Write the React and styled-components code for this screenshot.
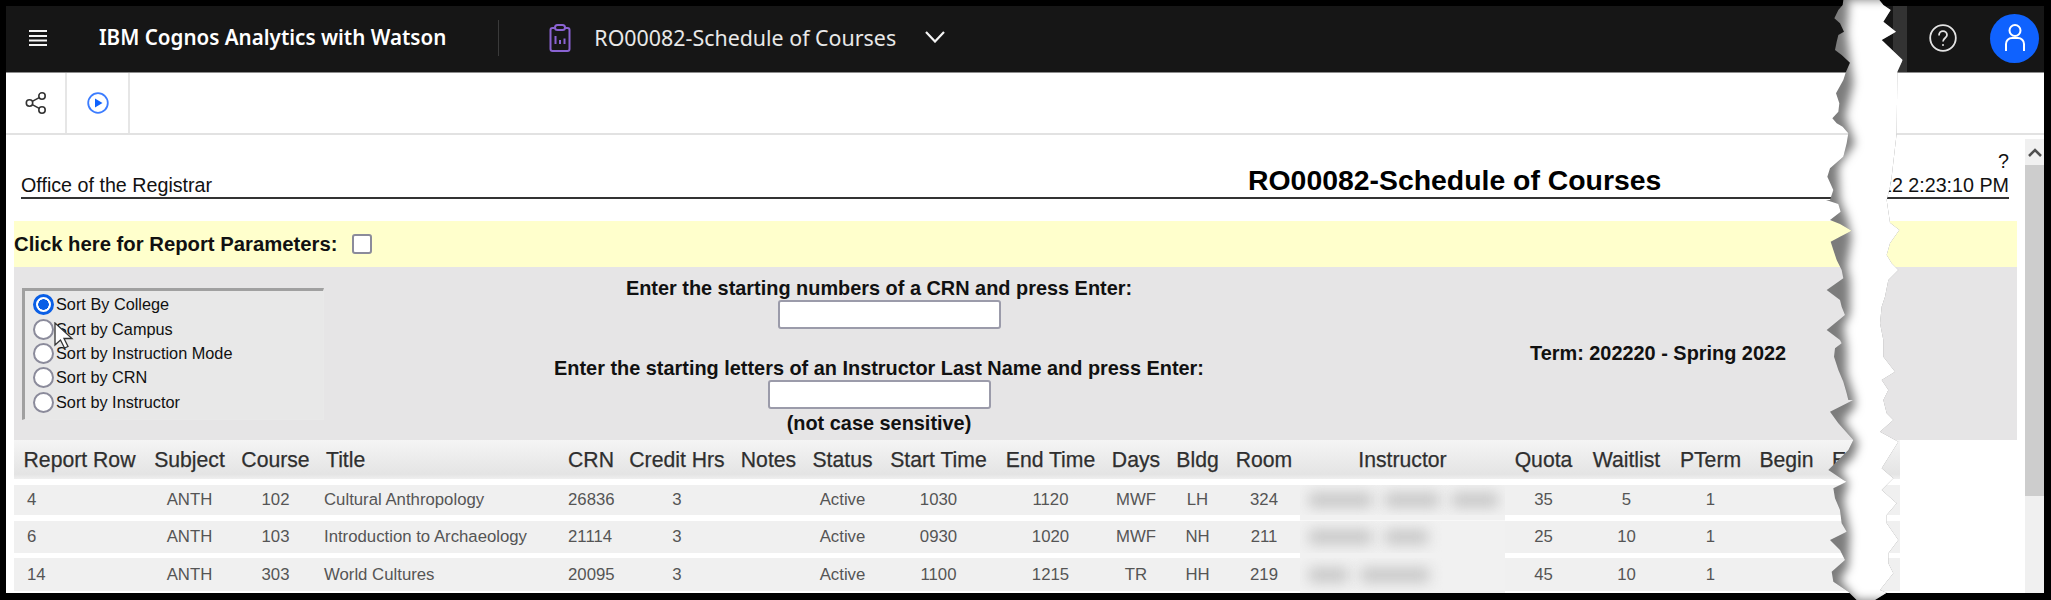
import React from 'react';
import styled, { createGlobalStyle } from 'styled-components';

const GlobalStyle = createGlobalStyle`
	html, body {
		margin: 0;
		background: #000;
		overflow: hidden;
	}
	* {
		box-sizing: border-box;
	}
`;

const COLUMNS =
	'131px 89px 83px 244px 60px 112px 71px 77px 115px 109px 62px 61px 72px 205px 77px 89px 79px 73px 77px';

const sortOptions = [
	'Sort By College',
	'Sort by Campus',
	'Sort by Instruction Mode',
	'Sort by CRN',
	'Sort by Instructor'
];

const headers = [
	{ label: 'Report Row' },
	{ label: 'Subject' },
	{ label: 'Course' },
	{ label: 'Title', align: 'left' },
	{ label: 'CRN' },
	{ label: 'Credit Hrs' },
	{ label: 'Notes' },
	{ label: 'Status' },
	{ label: 'Start Time' },
	{ label: 'End Time' },
	{ label: 'Days' },
	{ label: 'Bldg' },
	{ label: 'Room' },
	{ label: 'Instructor' },
	{ label: 'Quota' },
	{ label: 'Waitlist' },
	{ label: 'PTerm' },
	{ label: 'Begin' },
	{ label: 'End', align: 'left' }
];

const rows = [
	{
		height: 30,
		row: '4',
		course: '102',
		title: 'Cultural Anthropology',
		crn: '26836',
		start: '1030',
		end: '1120',
		days: 'MWF',
		bldg: 'LH',
		room: '324',
		blur: [63, 54, 46],
		quota: '35',
		wait: '5'
	},
	{
		height: 32,
		row: '6',
		course: '103',
		title: 'Introduction to Archaeology',
		crn: '21114',
		start: '0930',
		end: '1020',
		days: 'MWF',
		bldg: 'NH',
		room: '211',
		blur: [63, 43],
		quota: '25',
		wait: '10'
	},
	{
		height: 33,
		row: '14',
		course: '303',
		title: 'World Cultures',
		crn: '20095',
		start: '1100',
		end: '1215',
		days: 'TR',
		bldg: 'HH',
		room: '219',
		blur: [39, 68],
		quota: '45',
		wait: '10'
	}
];

const TEAR_LEFT =
	'70,0 68,15 55,30 43,55 60,70 72,95 55,105 50,125 45,150 65,165 90,188 78,215 70,240 48,280 58,310 55,335 37,355 50,370 68,380 85,400 80,430 70,470 30,505 22,530 40,570 30,600 18,600 55,612 62,635 30,660 60,672 95,692 60,710 32,725 40,750 50,780 65,810 70,835 20,870 60,900 65,920 75,945 20,990 60,1020 65,1030 45,1045 42,1070 55,1110 70,1145 80,1180 85,1200 100,1200 30,1235 55,1270 100,1320 85,1350 25,1410 70,1440 80,1445 40,1465 45,1495 60,1530 65,1570 80,1595 30,1620 60,1650 75,1680 35,1715 40,1745 85,1775 110,1800';
const TEAR_RIGHT =
	'165,1800 200,1778 180,1770 220,1720 205,1690 205,1660 235,1620 200,1570 200,1545 230,1510 185,1470 220,1435 185,1405 235,1325 180,1295 220,1260 200,1240 190,1200 205,1170 185,1140 225,1115 190,1070 190,1020 180,970 185,920 195,890 205,840 235,810 215,790 200,765 210,730 238,690 210,668 200,600 210,560 215,530 230,400 232,215 248,180 185,120 228,95 190,65 212,30 190,15 178,0';
const TEAR_CORE =
	'85,0 85,30 80,100 90,180 100,250 75,350 105,430 55,500 60,600 80,650 95,710 80,800 90,840 90,940 70,980 80,1040 80,1120 105,1200 105,1220 70,1260 115,1330 100,1370 60,1410 85,1450 70,1500 90,1600 85,1700 60,1740 110,1800 300,1800 300,0';

const Page = styled.div`
	position: relative;
	width: 2051px;
	height: 600px;
	padding: 6px 7px 7px 6px;
	background: #000;
	font-family: 'Liberation Sans', Arial, sans-serif;
`;

const Frame = styled.div`
	display: flex;
	flex-direction: column;
	height: 100%;
	background: #fff;
	overflow: hidden;
`;

const TopBar = styled.header`
	display: flex;
	align-items: center;
	flex: none;
	height: 67px;
	padding: 0 5px 2px 23px;
	background: #161616;
	border-bottom: 1px solid #8d8d8d;
	color: #fff;
	font-family: 'Noto Sans', sans-serif;
`;

const Brand = styled.span`
	margin: 0 0 2px 52px;
	font-size: 20.6px;
	font-weight: 600;
	white-space: nowrap;
`;

const BarDivider = styled.span`
	width: 1px;
	height: 36px;
	margin-left: 52px;
	background: #3a3a3a;
`;

const ClipIcon = styled.svg`
	margin-left: 50px;
`;

const ReportName = styled.span`
	margin: 0 0 2px 23px;
	font-size: 21.4px;
	white-space: nowrap;
	color: #e8e8e8;
`;

const Chevron = styled.svg`
	margin: 0 0 2px 29px;
`;

const BarShade = styled.span`
	align-self: stretch;
	width: 14px;
	margin: 0 0 -2px auto;
	background: #333;
`;

const HelpIcon = styled.svg`
	margin-left: 22px;
`;

const Avatar = styled.span`
	display: flex;
	align-items: center;
	justify-content: center;
	width: 49px;
	height: 49px;
	margin-left: 33px;
	border-radius: 50%;
	background: #0f62fe;
`;

const ToolBar = styled.div`
	display: flex;
	flex: none;
	height: 62px;
	background: #fff;
	border-bottom: 2px solid #e2e2e2;
`;

const ToolButton = styled.div`
	display: flex;
	align-items: center;
	justify-content: center;
	width: ${p => p.$width}px;
	border-right: 2px solid #e6e6e6;
`;

const Body = styled.div`
	display: flex;
	flex: 1;
	min-height: 0;
`;

const Report = styled.main`
	flex: 1;
	min-width: 0;
	padding: 0 8px;
	color: #111;
`;

const ReportHead = styled.div`
	display: grid;
	grid-template-columns: 1227px 1fr auto;
	align-items: end;
	width: 1988px;
	height: 64px;
	margin: 0 0 22px 7px;
	border-bottom: 2px solid #333;
	font-size: 19.7px;
	line-height: 24px;
`;

const ReportTitle = styled.h1`
	margin: 0 0 1px;
	font-size: 28.4px;
	line-height: 32px;
	font-weight: 700;
	color: #000;
`;

const Stamp = styled.div`
	text-align: right;
	white-space: nowrap;
`;

const ParamBar = styled.label`
	display: flex;
	align-items: center;
	gap: 14px;
	height: 46px;
	background: #ffffcc;
	font-size: 20.3px;
	font-weight: 700;
`;

const Check = styled.input`
	appearance: none;
	width: 20px;
	height: 20px;
	margin: 0;
	background: #fff;
	border: 2.5px solid #8b8b9b;
	border-radius: 3px;
`;

const Panel = styled.section`
	display: grid;
	grid-template-columns: 302px 1110px 1fr;
	height: 173px;
	padding: 0 0 0 8px;
	background: #e6e5e6;
`;

const SortBox = styled.div`
	display: flex;
	flex-direction: column;
	justify-content: center;
	gap: 3.3px;
	height: 132px;
	margin-top: 21px;
	padding: 0 0 3px 8px;
	background: #e8e8e8;
	border: solid;
	border-color: #a0a0a0 #e9e9e9 #e9e9e9 #a0a0a0;
	border-width: 3px 1px 1px 3px;
`;

const SortOption = styled.label`
	display: flex;
	align-items: center;
	gap: 2px;
	height: 21px;
	font-size: 16.3px;
	white-space: nowrap;
`;

const Radio = styled.input`
	appearance: none;
	flex: none;
	width: 21px;
	height: 21px;
	margin: 0;
	border-radius: 50%;
	background: #fff;
	border: 2.5px solid #8b8b9b;
	&:checked {
		border: 3px solid #0a5fe6;
		background: radial-gradient(circle, #0a5fe6 0 5px, #fff 5.5px);
	}
`;

const SearchForm = styled.div`
	display: flex;
	flex-direction: column;
	align-items: center;
	padding-top: 10px;
	font-size: 19.9px;
	line-height: 22px;
	font-weight: 700;
`;

const Prompt = styled.div`
	margin-top: ${p => p.$top || 0}px;
	white-space: nowrap;
`;

const SearchInput = styled.input`
	display: block;
	width: 223px;
	height: 29px;
	margin: 1px 0 3px ${p => p.$shift || 0}px;
	background: #fff;
	border: 2px solid #9b9baa;
	border-radius: 3px;
`;

const Term = styled.div`
	align-self: center;
	padding-left: 96px;
	font-size: 19.9px;
	font-weight: 700;
	white-space: nowrap;
`;

const TableWrap = styled.div`
	display: flex;
	flex-direction: column;
	gap: 5.5px;
	width: 1886px;
`;

const HeadRow = styled.div`
	display: grid;
	grid-template-columns: ${COLUMNS};
	align-items: center;
	height: 39px;
	margin-bottom: 0.5px;
	background: linear-gradient(#f5f5f5, #e4e4e4 88%, #efefef);
	color: #2f2f2f;
	font-size: 21.2px;
	-webkit-text-stroke: 0.25px #2f2f2f;
`;

const HeadCell = styled.div`
	padding-left: ${p => (p.$align === 'left' ? '9px' : 0)};
	text-align: ${p => p.$align || 'center'};
	white-space: nowrap;
`;

const DataRow = styled.div`
	display: grid;
	grid-template-columns: ${COLUMNS};
	align-items: center;
	height: ${p => p.$height}px;
	background: #f0f0f0;
	color: #555;
	font-size: 16.75px;
`;

const DataCell = styled.div`
	padding-left: ${p => p.$pad || 0}px;
	text-align: ${p => (p.$pad ? 'left' : 'center')};
	white-space: nowrap;
`;

const BlurCell = styled.div`
	display: flex;
	align-items: center;
	align-self: stretch;
	gap: 13px;
	padding-left: 9px;
	overflow: hidden;
	background: #f1f1f1;
	box-shadow: 0 5.5px 0 #f1f1f1;
`;

const BlurName = styled.span`
	width: ${p => p.$width}px;
	height: 14px;
	background: #c4c4c4;
	filter: blur(7px);
`;

const ScrollBar = styled.div`
	display: flex;
	flex-direction: column;
	flex: none;
	width: 19px;
	margin-top: 4px;
	background: #f0f0f0;
`;

const ScrollArrow = styled.div`
	display: flex;
	align-items: center;
	justify-content: center;
	height: 26px;
`;

const ScrollThumb = styled.div`
	height: 331px;
	background: #cdcdcd;
`;

const Tear = styled.svg`
	position: absolute;
	top: 0;
	left: 1820px;
`;

const Cursor = styled.svg`
	position: absolute;
	top: 322px;
	left: 54px;
`;

const App = () => {
	return (
		<Page>
			<GlobalStyle />
			<Frame>
				<TopBar>
					<svg width='18' height='16' viewBox='0 0 18 16' stroke='#f4f4f4' strokeWidth='2'>
						<path d='M0 1h18M0 6h18M0 10.500h18M0 15h18' />
					</svg>
					<Brand>IBM Cognos Analytics with Watson</Brand>
					<BarDivider />
					<ClipIcon width='22' height='28' viewBox='0 0 22 28' fill='none' stroke='#8a63d2' strokeWidth='2'>
						<rect x='1.500' y='4' width='19' height='23' rx='2' />
						<rect x='6' y='1' width='10' height='5' rx='2.500' fill='#161616' />
						<path d='M6.500 20v-8M11 20v-4M15.500 20v-5.500' />
					</ClipIcon>
					<ReportName>RO00082-Schedule of Courses</ReportName>
					<Chevron width='20' height='12' viewBox='0 0 20 12' fill='none' stroke='#f4f4f4' strokeWidth='2.200'>
						<path d='M1 1l9 9.500L19 1' />
					</Chevron>
					<BarShade />
					<HelpIcon width='28' height='28' viewBox='0 0 28 28' fill='none' stroke='#e4e4e4' strokeWidth='1.800'>
						<circle cx='14' cy='14' r='12.800' />
						<path d='M10 11.500c0-6 8-5.500 8-.500 0 3-4 3-4 6.500' />
						<circle cx='14' cy='21' r='1' fill='#e4e4e4' stroke='none' />
					</HelpIcon>
					<Avatar>
						<svg width='22' height='28' viewBox='0 0 22 28' fill='none' stroke='#fff' strokeWidth='2'>
							<circle cx='11' cy='6.500' r='5.500' />
							<path d='M2 27v-7a6 6 0 0 1 6-6h6a6 6 0 0 1 6 6v7' />
						</svg>
					</Avatar>
				</TopBar>
				<ToolBar>
					<ToolButton $width={61}>
						<svg width='22' height='22' viewBox='0 0 22 22' fill='none' stroke='#333' strokeWidth='1.600'>
							<circle cx='4.500' cy='11' r='3.200' />
							<circle cx='17' cy='4' r='3.200' />
							<circle cx='17' cy='18' r='3.200' />
							<path d='M7.300 9.400l6.900-3.800M7.300 12.600l6.900 3.800' />
						</svg>
					</ToolButton>
					<ToolButton $width={63}>
						<svg width='22' height='22' viewBox='0 0 22 22' fill='none' stroke='#3b7cff' strokeWidth='1.800'>
							<circle cx='11' cy='11' r='9.800' />
							<path d='M8 6.500v9l7.500-4.500z' fill='#0f62fe' stroke='none' />
						</svg>
					</ToolButton>
				</ToolBar>
				<Body>
					<Report>
						<ReportHead>
							<div>Office of the Registrar</div>
							<ReportTitle>RO00082-Schedule of Courses</ReportTitle>
							<Stamp>
								<div>?</div>
								<div>2022 2:23:10 PM</div>
							</Stamp>
						</ReportHead>
						<ParamBar>
							Click here for Report Parameters:
							<Check type='checkbox' />
						</ParamBar>
						<Panel>
							<SortBox>
								{sortOptions.map((option, i) => (
									<SortOption key={option}>
										<Radio type='radio' name='sort' defaultChecked={i === 0} />
										{option}
									</SortOption>
								))}
							</SortBox>
							<SearchForm>
								<Prompt>Enter the starting numbers of a CRN and press Enter:</Prompt>
								<SearchInput $shift={20} />
								<Prompt $top={25}>Enter the starting letters of an Instructor Last Name and press Enter:</Prompt>
								<SearchInput />
								<Prompt>(not case sensitive)</Prompt>
							</SearchForm>
							<Term>Term: 202220 - Spring 2022</Term>
						</Panel>
						<TableWrap>
							<HeadRow>
								{headers.map(h => (
									<HeadCell key={h.label} $align={h.align}>
										{h.label}
									</HeadCell>
								))}
							</HeadRow>
							{rows.map(r => (
								<DataRow key={r.crn} $height={r.height}>
									<DataCell $pad={13}>{r.row}</DataCell>
									<DataCell>ANTH</DataCell>
									<DataCell>{r.course}</DataCell>
									<DataCell $pad={7}>{r.title}</DataCell>
									<DataCell $pad={7}>{r.crn}</DataCell>
									<DataCell>3</DataCell>
									<DataCell />
									<DataCell>Active</DataCell>
									<DataCell>{r.start}</DataCell>
									<DataCell>{r.end}</DataCell>
									<DataCell>{r.days}</DataCell>
									<DataCell>{r.bldg}</DataCell>
									<DataCell>{r.room}</DataCell>
									<BlurCell>
										{r.blur.map((w, i) => (
											<BlurName key={i} $width={w} />
										))}
									</BlurCell>
									<DataCell>{r.quota}</DataCell>
									<DataCell>{r.wait}</DataCell>
									<DataCell>1</DataCell>
								</DataRow>
							))}
						</TableWrap>
					</Report>
					<ScrollBar>
						<ScrollArrow>
							<svg width='14' height='9' viewBox='0 0 14 9' fill='none' stroke='#505050' strokeWidth='2.500'>
								<path d='M1 8l6-6 6 6' />
							</svg>
						</ScrollArrow>
						<ScrollThumb />
					</ScrollBar>
				</Body>
			</Frame>
			<Cursor width='22' height='28' viewBox='0 0 22 28'>
				<path d='M1 1v22l5.500-5 4 8 3.500-1.500-4-8h8z' fill='#fff' stroke='#333' strokeWidth='1.300' />
			</Cursor>
			<Tear width='100' height='600' viewBox='0 0 300 1800'>
				<defs>
					<clipPath id='tear-outline'>
						<polygon points={`${TEAR_LEFT} ${TEAR_RIGHT}`} />
					</clipPath>
					<filter id='tear-soft' x='-20%' y='-5%' width='140%' height='110%'>
						<feGaussianBlur stdDeviation='14' />
					</filter>
				</defs>
				<g clipPath='url(#tear-outline)'>
					<rect width='300' height='1800' fill='#7c7c7c' />
					<polygon points={TEAR_CORE} fill='#fff' filter='url(#tear-soft)' />
				</g>
			</Tear>
		</Page>
	);
};

export default App;
